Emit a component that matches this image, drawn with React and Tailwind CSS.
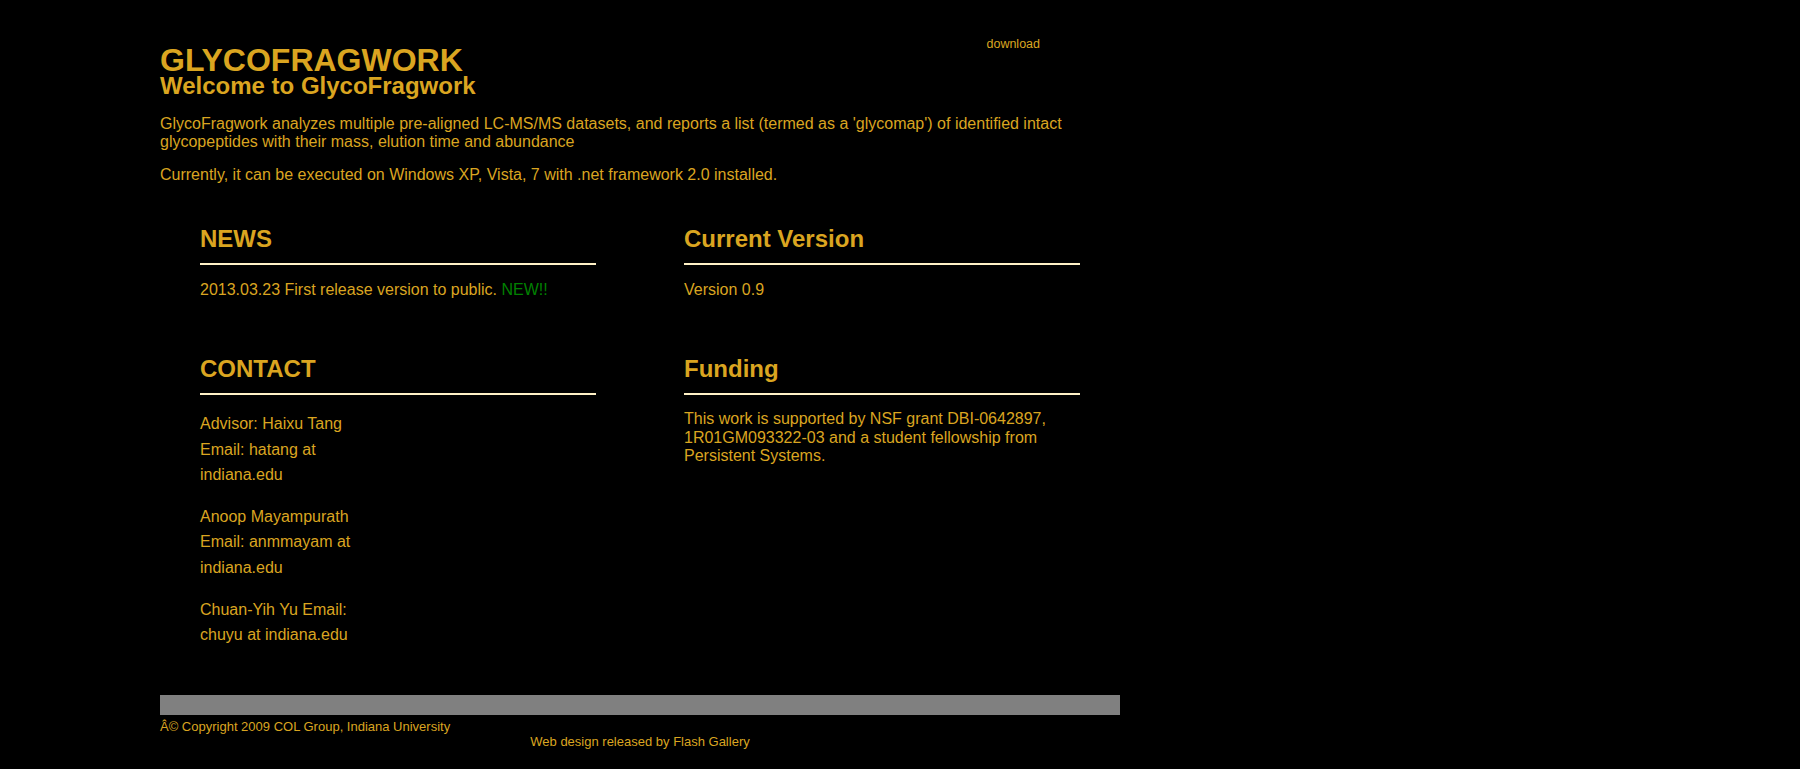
export default function App() {
  return (
    <div className="min-h-screen bg-black font-['Liberation_Sans',Arial,sans-serif] text-[#daa520]">
      <div className="ml-[160px] w-[960px] pt-[34px]">
        {/* Header */}
        <div className="flex w-[880px] items-start justify-between">
          <div className="pt-[10.5px]">
            <h1 className="text-[32px] font-bold leading-[30px]">GLYCOFRAGWORK</h1>
            <h2 className="text-[24px] font-bold leading-[22px]">Welcome to GlycoFragwork</h2>
          </div>
          <a href="#" className="mt-[2.5px] text-[12.5px] leading-[15px]">download</a>
        </div>

        <p className="mt-[18px] text-[16px] leading-[18px]">
          GlycoFragwork analyzes multiple pre-aligned LC-MS/MS datasets, and reports a list (termed as a 'glycomap') of identified intact glycopeptides with their mass, elution time and abundance
        </p>
        <p className="mt-[15px] text-[16px] leading-[18px]">
          Currently, it can be executed on Windows XP, Vista, 7 with .net framework 2.0 installed.
        </p>

        {/* Sections */}
        <div className="mt-[41px] grid grid-cols-[396px_396px] gap-x-[88px] gap-y-[56px] pl-[40px]">
          <div>
            <h3 className="border-b-2 border-[#fff1c6] pb-[10px] text-[24px] font-bold leading-[28px]">NEWS</h3>
            <p className="mt-4 text-[16px] leading-[18px]">
              2013.03.23 First release version to public. <span className="text-[#008000]">NEW!!</span>
            </p>
          </div>
          <div>
            <h3 className="border-b-2 border-[#fff1c6] pb-[10px] text-[24px] font-bold leading-[28px]">Current Version</h3>
            <p className="mt-4 text-[16px] leading-[18px]">Version 0.9</p>
          </div>
          <div>
            <h3 className="border-b-2 border-[#fff1c6] pb-[10px] text-[24px] font-bold leading-[28px]">CONTACT</h3>
            <div className="mt-[16.5px] w-[170px] space-y-4 text-[16px] leading-[25.6px]">
              <p>Advisor: Haixu Tang<br />Email: hatang at indiana.edu</p>
              <p>Anoop Mayampurath<br />Email: anmmayam at indiana.edu</p>
              <p>Chuan-Yih Yu Email: chuyu at indiana.edu</p>
            </div>
          </div>
          <div>
            <h3 className="border-b-2 border-[#fff1c6] pb-[10px] text-[24px] font-bold leading-[28px]">Funding</h3>
            <p className="mt-[15.5px] text-[16px] leading-[18.6px]">
              This work is supported by NSF grant DBI-0642897, 1R01GM093322-03 and a student fellowship from Persistent Systems.
            </p>
          </div>
        </div>

        {/* Footer */}
        <div className="mt-[47px] h-[20px] bg-[#808080]" />
        <div className="pt-[4.5px] text-[13px] leading-[15px]">
          <p>Â© Copyright 2009 COL Group, Indiana University</p>
          <p className="text-center">Web design released by Flash Gallery</p>
        </div>
      </div>
    </div>
  );
}
